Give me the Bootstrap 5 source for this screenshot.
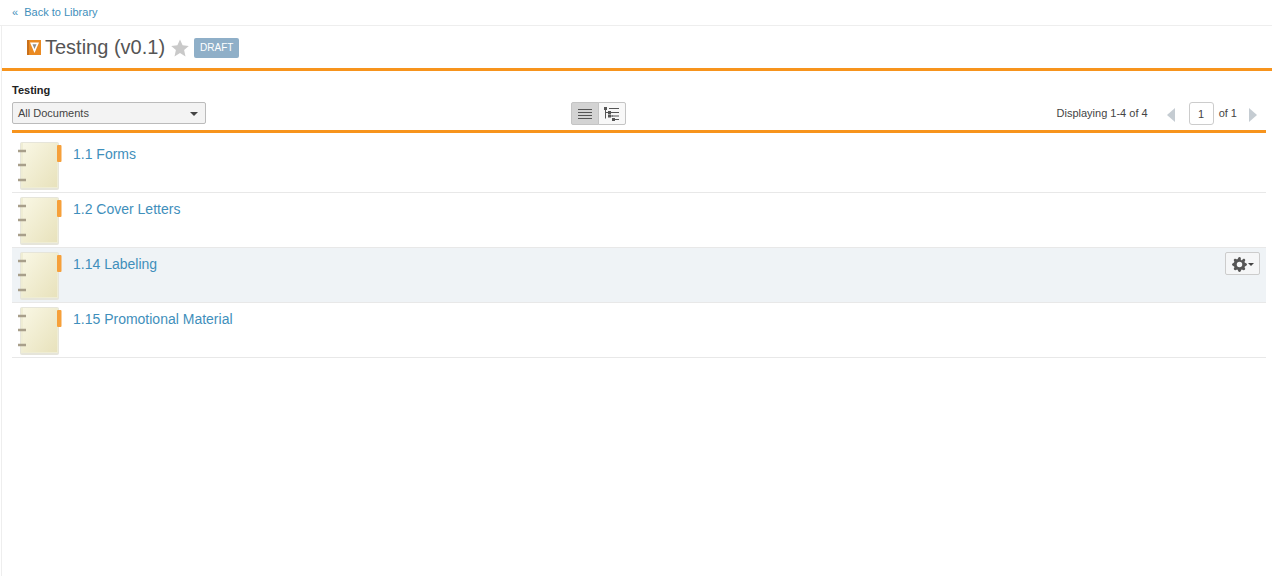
<!DOCTYPE html>
<html lang="en">
<head>
    <meta charset="UTF-8">
    <title>Testing (v0.1)</title>
    <link rel="stylesheet" href="https://cdn.jsdelivr.net/npm/bootstrap@5.3.0/dist/css/bootstrap.min.css">
    <style>
        html, body { height: 100%; }
        body { font-family: "Liberation Sans", Arial, sans-serif; font-size: 11px; color: #333; overflow: hidden; }
        a { color: #3f8fbb; text-decoration: none; }
        .back-bar { height: 26px; padding: 0 12px; font-size: 11px; border-bottom: 1px solid #eee; color: #3f8fbb; }
        .back-bar a { margin-left: 3px; }
        .page-wrap { margin-left: 1px; border-left: 1px solid #eee; height: calc(100% - 26px); }
        .title-bar { height: 45px; padding: 0 0 0 25px; border-bottom: 3px solid #f7941d; }
        .title-text { font-size: 20px; color: #555; margin: 0 6px 0 4px; font-weight: 400; line-height: 1; }
        .title-star { margin-top: 2px; }
        .draft-tag { background: #8fafc8; color: #fff; font-size: 10px; line-height: 20px; padding: 0 6px; border-radius: 2px; margin: 2px 0 0 5px; }
        .list-area { padding: 0 6px 0 10px; }
        .lib-name { font-size: 11px; font-weight: 700; color: #222; line-height: 12px; padding-top: 13px; }
        .tool-row { height: 31px; margin-top: 6px; border-bottom: 3px solid #f7941d; margin-bottom: 5px; }
        .tool-left { flex: 0 0 559px; }
        .doc-select { width: 194px; height: 22px; background: #f3f3f3; border: 1px solid #bbb; border-radius: 2px; padding: 1px 7px 0 5px; font-size: 11px; color: #444; }
        .select-caret { border-left: 4px solid transparent; border-right: 4px solid transparent; border-top: 4.5px solid #444; }
        .view-btn { width: 28px; height: 23px; padding: 0; border: 1px solid #c4c4c4; background: #f8f8f8; border-radius: 2px; }
        .view-btn:first-child { background: #d3d3d3; width: 28px; }
        .view-btn + .view-btn { width: 28px; margin-left: -1px; }
        .pager { font-size: 11px; color: #444; height: 23px; }
        .pager-num { width: 25px; height: 23px; border: 1px solid #ccc; border-radius: 3px; background: #fff; margin: 0 5px 0 14px; font-size: 11px; padding-top: 3px; }
        .pager-arrow { width: 0; height: 0; margin-top: 3px; border-top: 7px solid transparent; border-bottom: 7px solid transparent; }
        .arrow-left { border-right: 8px solid #c5ccd2; margin-left: 19px; }
        .arrow-right { border-left: 8px solid #c5ccd2; margin-left: 12px; margin-right: 9px; }
        .doc-row { height: 55px; border-bottom: 1px solid #e8e8e8; padding: 0 6px 0 6px; }
        .doc-row.is-hover { background: #eff3f6; }
        .doc-row a { font-size: 14px; line-height: 16px; margin-left: 11px; margin-top: 8px; }
        .doc-icon { flex: 0 0 44px; margin-top: 3px; height: 48px; }
        .gear-btn { width: 35px; height: 23px; padding: 1px 0 0; margin-top: 4px; background: #f5f6f7; border: 1px solid #ccc; border-radius: 2px; }
        .gear-caret { border-left: 3.5px solid transparent; border-right: 3.5px solid transparent; border-top: 3.5px solid #444; margin-left: 1px; }
    </style>
</head>
<body>
    <div class="back-bar d-flex align-items-center">
        <span>&laquo;</span>&nbsp;<a href="#">Back to Library</a>
    </div>
    <div class="page-wrap">
        <div class="title-bar d-flex align-items-center">
            <svg width="14" height="15" viewBox="0 0 14 15"><rect width="14" height="15" fill="#ea8a22"/><rect width="2" height="15" fill="#c9701a"/><path d="M3 2.500h9L7.500 13z" fill="#fff"/><path d="M5.500 4.200h4L7.500 9z" fill="#8d8d8d"/></svg>
            <h1 class="title-text">Testing (v0.1)</h1>
            <svg class="title-star" width="18" height="18" viewBox="0 0 18 18"><path d="M9 .5l2.600 5.800 6.200.6-4.700 4.200 1.400 6.300L9 14.100l-5.500 3.300 1.400-6.300L.2 6.900l6.200-.6z" fill="#c9c9c9"/></svg>
            <span class="draft-tag">DRAFT</span>
        </div>
        <div class="list-area">
            <div class="lib-name">Testing</div>
            <div class="tool-row d-flex align-items-start">
                <div class="tool-left">
                    <div class="doc-select d-flex align-items-center justify-content-between"><span>All Documents</span><span class="select-caret"></span></div>
                </div>
                <div class="btn-group">
                    <button type="button" class="btn view-btn">
                        <svg width="14" height="12" viewBox="0 0 14 12" class="d-block mx-auto"><path d="M0 1.500h14M0 4.500h14M0 7.500h14M0 10.500h14" stroke="#555" stroke-width="1"/></svg>
                    </button>
                    <button type="button" class="btn view-btn">
                        <svg width="16" height="16" viewBox="0 0 16 16" class="d-block mx-auto"><path d="M1.500 3v9.500M1.500 6.500h4M6 10h3" stroke="#555" fill="none"/><path d="M5 2.500h10M7 6.500h8M8 10h7M11 13.500h4" stroke="#555"/><rect x="0" y="1" width="3" height="3" fill="#555"/><rect x="4" y="5" width="3" height="3" fill="#555"/><rect x="4" y="8.500" width="3" height="3" fill="#555"/><rect x="8" y="12" width="3" height="3" fill="#555"/></svg>
                    </button>
                </div>
                <div class="pager d-flex align-items-center ms-auto">
                    <span>Displaying 1-4 of 4</span>
                    <span class="pager-arrow arrow-left"></span>
                    <div class="pager-num text-center">1</div>
                    <span>of 1</span>
                    <span class="pager-arrow arrow-right"></span>
                </div>
            </div>
            <div id="docList"></div>
        </div>
    </div>

    <script>
        // rows of the document list
        const docs = ['1.1 Forms', '1.2 Cover Letters', '1.14 Labeling', '1.15 Promotional Material'];
        const gear = '<button type="button" class="btn gear-btn d-flex align-items-center justify-content-center ms-auto">'
            + '<svg width="15" height="15" viewBox="0 0 16 16"><path fill="#555" fill-rule="evenodd" d="M9.405 1.05c-.413-1.4-2.397-1.4-2.81 0l-.1.34a1.464 1.464 0 0 1-2.105.872l-.31-.17c-1.283-.698-2.686.705-1.987 1.987l.169.311c.446.82.023 1.841-.872 2.105l-.34.1c-1.4.413-1.4 2.397 0 2.81l.34.1a1.464 1.464 0 0 1 .872 2.105l-.17.31c-.698 1.283.705 2.686 1.987 1.987l.311-.169a1.464 1.464 0 0 1 2.105.872l.1.34c.413 1.4 2.397 1.4 2.81 0l.1-.34a1.464 1.464 0 0 1 2.105-.872l.31.17c1.283.698 2.686-.705 1.987-1.987l-.169-.311a1.464 1.464 0 0 1 .872-2.105l.34-.1c1.4-.413 1.4-2.397 0-2.81l-.34-.1a1.464 1.464 0 0 1-.872-2.105l.17-.31c.698-1.283-.705-2.686-1.987-1.987l-.311.169a1.464 1.464 0 0 1-2.105.872l-.1-.34zM8 10.93a2.929 2.929 0 1 1 0-5.86 2.929 2.929 0 0 1 0 5.858z"/></svg>'
            + '<span class="gear-caret"></span></button>';
        function notebook(i) {
            return '<svg width="44" height="50" viewBox="0 0 44 50">'
                + '<defs><linearGradient id="pg' + i + '" x1="0" y1="0" x2="1" y2="1"><stop offset="0" stop-color="#f9f7e4"/><stop offset="1" stop-color="#e8e2bc"/></linearGradient></defs>'
                + '<rect x="2" y="1" width="39" height="48" rx="2" fill="#e6e5da"/>'
                + '<rect x="3" y="2" width="37" height="45" fill="#efedd4"/>'
                + '<rect x="5" y="2" width="34" height="44" fill="url(#pg' + i + ')"/>'
                + '<rect x="39" y="4" width="4.500" height="17" rx="1" fill="#f6a03a"/>'
                + '<path d="M0 10h8M0 24h8M0 39h8" stroke="#a89f8a" stroke-width="2.500"/></svg>';
        }
        document.getElementById('docList').innerHTML = docs.map((name, i) =>
            '<div class="doc-row d-flex align-items-start' + (i === 2 ? ' is-hover' : '') + '">'
            + '<span class="doc-icon">' + notebook(i) + '</span><a href="#">' + name + '</a>'
            + (i === 2 ? gear : '') + '</div>').join('');
    </script>
</body>
</html>
